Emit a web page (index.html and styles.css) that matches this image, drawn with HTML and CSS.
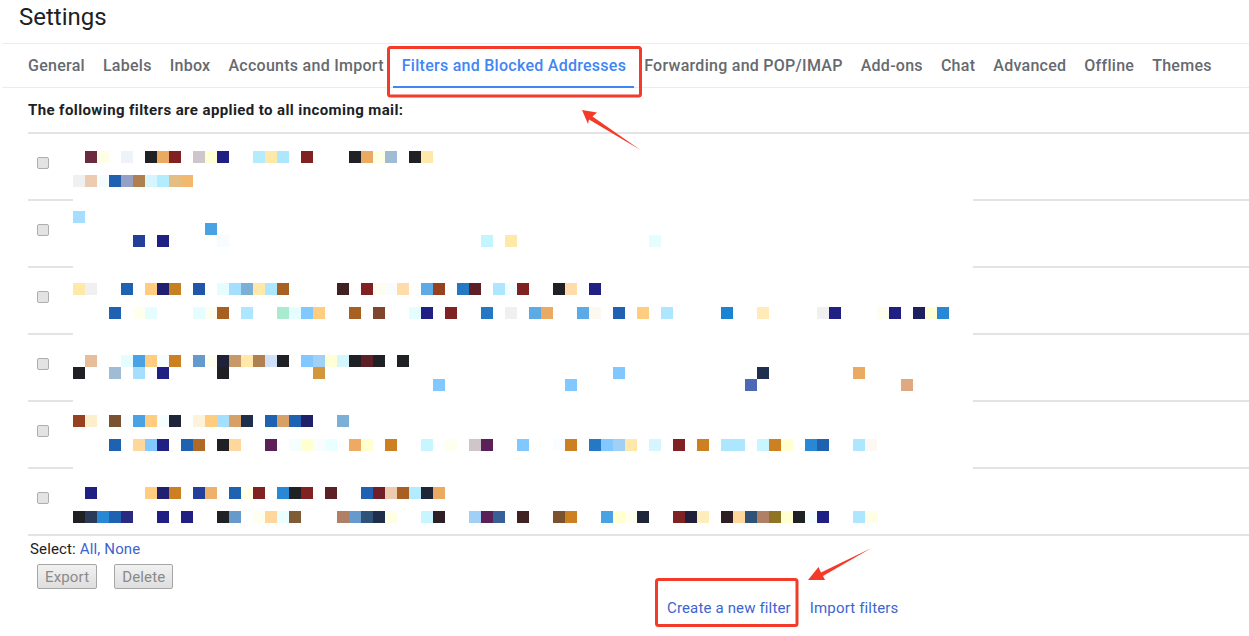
FILE: index.html
```html
<!DOCTYPE html>
<html lang="en">
<head>
<meta charset="utf-8">
<title>Settings</title>
<link rel="stylesheet" href="styles.css">
</head>
<body>
<header class="title-bar"><h1 class="title">Settings</h1></header>
<nav class="tabs">
  <a class="tab">General</a>
  <a class="tab">Labels</a>
  <a class="tab">Inbox</a>
  <a class="tab">Accounts and Import</a>
  <a class="tab active">Filters and Blocked Addresses</a>
  <a class="tab">Forwarding and POP/IMAP</a>
  <a class="tab">Add-ons</a>
  <a class="tab">Chat</a>
  <a class="tab">Advanced</a>
  <a class="tab">Offline</a>
  <a class="tab">Themes</a>
</nav>
<main class="content">
  <p class="intro">The following filters are applied to all incoming mail:</p>
  <ul class="filters">
    <li class="filter">
      <span class="check"></span>
      <svg class="mosaic" width="900" height="67" aria-hidden="true">
        <rect x="12" y="17" fill="#6b2a42"/><rect x="24" y="17" fill="#ffffe6"/><rect x="48" y="17" fill="#eef3fa"/><rect x="72" y="17" fill="#1f2124"/><rect x="84" y="17" fill="#eaaa62"/><rect x="96" y="17" fill="#802222"/><rect x="120" y="17" fill="#cec6ca"/><rect x="132" y="17" fill="#ffffd5"/><rect x="144" y="17" fill="#202084"/><rect x="180" y="17" fill="#b3ebff"/><rect x="192" y="17" fill="#ffe8aa"/><rect x="204" y="17" fill="#ade6ff"/><rect x="228" y="17" fill="#802222"/><rect x="276" y="17" fill="#1f2124"/><rect x="288" y="17" fill="#eaaa62"/><rect x="300" y="17" fill="#ffffe6"/><rect x="312" y="17" fill="#a0bcd4"/><rect x="336" y="17" fill="#1f2124"/><rect x="348" y="17" fill="#ffe8aa"/>
        <rect x="0" y="41" fill="#f0f0f0"/><rect x="12" y="41" fill="#eccbb0"/><rect x="24" y="41" fill="#f5fdff"/><rect x="36" y="41" fill="#1f62b2"/><rect x="48" y="41" fill="#96a0c4"/><rect x="60" y="41" fill="#b07f50"/><rect x="72" y="41" fill="#d5f5ff"/><rect x="84" y="41" fill="#b3ebff"/><rect x="96" y="41" fill="#e3bd82"/><rect x="108" y="41" fill="#f2b96e"/>
      </svg>
    </li>
    <li class="filter">
      <span class="check"></span>
      <svg class="mosaic" width="900" height="67" aria-hidden="true">
        <rect x="0" y="10" fill="#a5dfff"/>
        <rect x="132" y="22" fill="#48a2e4"/>
        <rect x="60" y="34" fill="#233f9a"/><rect x="84" y="34" fill="#202084"/><rect x="144" y="34" fill="#f8fcff"/><rect x="408" y="34" fill="#c3f5ff"/><rect x="432" y="34" fill="#ffe8aa"/><rect x="576" y="34" fill="#e6fdff"/>
      </svg>
    </li>
    <li class="filter">
      <span class="check"></span>
      <svg class="mosaic" width="900" height="67" aria-hidden="true">
        <rect x="0" y="15" fill="#ffe8aa"/><rect x="12" y="15" fill="#f0f0f0"/><rect x="48" y="15" fill="#1f62b2"/><rect x="72" y="15" fill="#ffcc80"/><rect x="84" y="15" fill="#201f70"/><rect x="96" y="15" fill="#c58022"/><rect x="120" y="15" fill="#2055a8"/><rect x="144" y="15" fill="#e6fdff"/><rect x="156" y="15" fill="#a5dfff"/><rect x="168" y="15" fill="#7cafd6"/><rect x="180" y="15" fill="#ffe8aa"/><rect x="192" y="15" fill="#ade6ff"/><rect x="204" y="15" fill="#a86022"/><rect x="264" y="15" fill="#402222"/><rect x="288" y="15" fill="#802222"/><rect x="300" y="15" fill="#fffdf0"/><rect x="312" y="15" fill="#fafdff"/><rect x="324" y="15" fill="#ffdcaa"/><rect x="348" y="15" fill="#5caae6"/><rect x="360" y="15" fill="#964220"/><rect x="384" y="15" fill="#2578c4"/><rect x="396" y="15" fill="#5c2026"/><rect x="420" y="15" fill="#ade6ff"/><rect x="432" y="15" fill="#f2feff"/><rect x="444" y="15" fill="#802222"/><rect x="480" y="15" fill="#1f2124"/><rect x="492" y="15" fill="#ffdcaa"/><rect x="516" y="15" fill="#202084"/>
        <rect x="36" y="39" fill="#1f62b2"/><rect x="60" y="39" fill="#ffffee"/><rect x="72" y="39" fill="#e6fdff"/><rect x="120" y="39" fill="#e6fdff"/><rect x="132" y="39" fill="#fdfdf0"/><rect x="144" y="39" fill="#a86022"/><rect x="168" y="39" fill="#ade6ff"/><rect x="204" y="39" fill="#aaeacf"/><rect x="216" y="39" fill="#e6fdff"/><rect x="228" y="39" fill="#80c8ff"/><rect x="240" y="39" fill="#ffcc80"/><rect x="276" y="39" fill="#a86022"/><rect x="300" y="39" fill="#80452c"/><rect x="336" y="39" fill="#e6fdff"/><rect x="348" y="39" fill="#202084"/><rect x="372" y="39" fill="#802222"/><rect x="408" y="39" fill="#2578c4"/><rect x="432" y="39" fill="#f0f0f0"/><rect x="456" y="39" fill="#5caae6"/><rect x="468" y="39" fill="#eaaa62"/><rect x="504" y="39" fill="#5caae6"/><rect x="516" y="39" fill="#fdf8f2"/><rect x="540" y="39" fill="#1f62b2"/><rect x="564" y="39" fill="#ffcc80"/><rect x="588" y="39" fill="#ade6ff"/><rect x="648" y="39" fill="#1c82d2"/><rect x="684" y="39" fill="#ffeab8"/><rect x="744" y="39" fill="#f0f0f0"/><rect x="756" y="39" fill="#202084"/><rect x="804" y="39" fill="#fffdf0"/><rect x="816" y="39" fill="#202084"/><rect x="840" y="39" fill="#1f2060"/><rect x="852" y="39" fill="#ffffd5"/><rect x="864" y="39" fill="#2888d6"/>
      </svg>
    </li>
    <li class="filter">
      <span class="check"></span>
      <svg class="mosaic" width="900" height="67" aria-hidden="true">
        <rect x="12" y="20" fill="#e8bd9a"/><rect x="48" y="20" fill="#e6fdff"/><rect x="60" y="20" fill="#48a2e4"/><rect x="72" y="20" fill="#ffcc80"/><rect x="84" y="20" fill="#f5fdff"/><rect x="96" y="20" fill="#cc8022"/><rect x="120" y="20" fill="#6699cc"/><rect x="132" y="20" fill="#fffdf0"/><rect x="144" y="20" fill="#20223a"/><rect x="156" y="20" fill="#c89868"/><rect x="168" y="20" fill="#ffe8aa"/><rect x="180" y="20" fill="#b08050"/><rect x="192" y="20" fill="#d0e0f8"/><rect x="204" y="20" fill="#1f2124"/><rect x="228" y="20" fill="#80c8ff"/><rect x="240" y="20" fill="#a0d0f5"/><rect x="252" y="20" fill="#ffffd5"/><rect x="264" y="20" fill="#d5f5ff"/><rect x="276" y="20" fill="#1f2124"/><rect x="288" y="20" fill="#5c2026"/><rect x="300" y="20" fill="#1f2124"/><rect x="324" y="20" fill="#1f2124"/>
        <rect x="0" y="32" fill="#1f2124"/><rect x="36" y="32" fill="#a0bcd4"/><rect x="60" y="32" fill="#a5dfff"/><rect x="84" y="32" fill="#202084"/><rect x="144" y="32" fill="#1f2124"/><rect x="240" y="32" fill="#d4963c"/><rect x="540" y="32" fill="#80c8ff"/><rect x="684" y="32" fill="#1f304e"/><rect x="780" y="32" fill="#eaaa62"/>
        <rect x="360" y="44" fill="#80c8ff"/><rect x="492" y="44" fill="#80c8ff"/><rect x="672" y="44" fill="#4d68b4"/><rect x="828" y="44" fill="#e0a880"/>
      </svg>
    </li>
    <li class="filter">
      <span class="check"></span>
      <svg class="mosaic" width="900" height="67" aria-hidden="true">
        <rect x="0" y="13" fill="#964220"/><rect x="12" y="13" fill="#fdeecc"/><rect x="36" y="13" fill="#7b5230"/><rect x="48" y="13" fill="#fafdff"/><rect x="60" y="13" fill="#48a2e4"/><rect x="72" y="13" fill="#ffcc80"/><rect x="84" y="13" fill="#f5fdff"/><rect x="96" y="13" fill="#20263a"/><rect x="120" y="13" fill="#fdf2dc"/><rect x="132" y="13" fill="#ffcc80"/><rect x="144" y="13" fill="#a5dfff"/><rect x="156" y="13" fill="#d6a066"/><rect x="168" y="13" fill="#1f2e4a"/><rect x="192" y="13" fill="#1f62b2"/><rect x="204" y="13" fill="#d6a066"/><rect x="216" y="13" fill="#1f62b2"/><rect x="228" y="13" fill="#202068"/><rect x="264" y="13" fill="#7cafd6"/>
        <rect x="36" y="37" fill="#1f62b2"/><rect x="60" y="37" fill="#ffd69c"/><rect x="72" y="37" fill="#80c8ff"/><rect x="84" y="37" fill="#202084"/><rect x="108" y="37" fill="#1f62b2"/><rect x="120" y="37" fill="#b06a28"/><rect x="144" y="37" fill="#1f2124"/><rect x="156" y="37" fill="#ffd69c"/><rect x="192" y="37" fill="#5c2058"/><rect x="216" y="37" fill="#f5fdff"/><rect x="228" y="37" fill="#ffffd0"/><rect x="240" y="37" fill="#fafdff"/><rect x="252" y="37" fill="#eaffff"/><rect x="276" y="37" fill="#eeaa62"/><rect x="288" y="37" fill="#ffffd0"/><rect x="312" y="37" fill="#cc8022"/><rect x="348" y="37" fill="#c8f6ff"/><rect x="372" y="37" fill="#fffff0"/><rect x="396" y="37" fill="#cec6ca"/><rect x="408" y="37" fill="#5c2058"/><rect x="444" y="37" fill="#80c8ff"/><rect x="480" y="37" fill="#fafdff"/><rect x="492" y="37" fill="#cc8022"/><rect x="516" y="37" fill="#2578c4"/><rect x="528" y="37" fill="#80c8ff"/><rect x="540" y="37" fill="#a0d0f5"/><rect x="552" y="37" fill="#ffe8aa"/><rect x="576" y="37" fill="#d5f5ff"/><rect x="600" y="37" fill="#802222"/><rect x="624" y="37" fill="#cc8022"/><rect x="648" y="37" fill="#ade6ff"/><rect x="660" y="37" fill="#ade6ff"/><rect x="684" y="37" fill="#c8f6ff"/><rect x="696" y="37" fill="#cc8022"/><rect x="708" y="37" fill="#ffffd0"/><rect x="732" y="37" fill="#2888d6"/><rect x="744" y="37" fill="#1f62b2"/><rect x="780" y="37" fill="#ade6ff"/><rect x="792" y="37" fill="#fdf8f2"/>
      </svg>
    </li>
    <li class="filter last">
      <span class="check"></span>
      <svg class="mosaic" width="900" height="65" aria-hidden="true">
        <rect x="12" y="18" fill="#202084"/><rect x="72" y="18" fill="#ffcc80"/><rect x="84" y="18" fill="#201f70"/><rect x="96" y="18" fill="#cc8022"/><rect x="120" y="18" fill="#233f9a"/><rect x="132" y="18" fill="#eeb06a"/><rect x="156" y="18" fill="#1f62b2"/><rect x="168" y="18" fill="#ffffe6"/><rect x="180" y="18" fill="#802222"/><rect x="204" y="18" fill="#2888d6"/><rect x="216" y="18" fill="#1f2124"/><rect x="228" y="18" fill="#802222"/><rect x="252" y="18" fill="#5c2026"/><rect x="288" y="18" fill="#1f62b2"/><rect x="300" y="18" fill="#702026"/><rect x="312" y="18" fill="#eccbb0"/><rect x="324" y="18" fill="#a86022"/><rect x="336" y="18" fill="#b3ebff"/><rect x="348" y="18" fill="#20263a"/><rect x="360" y="18" fill="#eaaa62"/>
        <rect x="0" y="42" fill="#1f2124"/><rect x="12" y="42" fill="#2a3a58"/><rect x="24" y="42" fill="#2888d6"/><rect x="36" y="42" fill="#1f62b2"/><rect x="48" y="42" fill="#2a2a80"/><rect x="84" y="42" fill="#202084"/><rect x="108" y="42" fill="#202084"/><rect x="144" y="42" fill="#1f2124"/><rect x="156" y="42" fill="#6699cc"/><rect x="180" y="42" fill="#fffff0"/><rect x="192" y="42" fill="#ffd69c"/><rect x="204" y="42" fill="#eaffff"/><rect x="216" y="42" fill="#7f5c36"/><rect x="264" y="42" fill="#b08066"/><rect x="276" y="42" fill="#6699cc"/><rect x="288" y="42" fill="#2f5278"/><rect x="300" y="42" fill="#1f2e4a"/><rect x="312" y="42" fill="#ffffe6"/><rect x="348" y="42" fill="#c8f6ff"/><rect x="360" y="42" fill="#2c2024"/><rect x="396" y="42" fill="#a0d0f5"/><rect x="408" y="42" fill="#5c2058"/><rect x="420" y="42" fill="#386098"/><rect x="444" y="42" fill="#402222"/><rect x="480" y="42" fill="#7b5230"/><rect x="492" y="42" fill="#cc8022"/><rect x="528" y="42" fill="#48a2e4"/><rect x="540" y="42" fill="#ffffd0"/><rect x="552" y="42" fill="#fffff0"/><rect x="564" y="42" fill="#20263a"/><rect x="600" y="42" fill="#802222"/><rect x="612" y="42" fill="#20203a"/><rect x="624" y="42" fill="#ffeebc"/><rect x="648" y="42" fill="#2c2024"/><rect x="660" y="42" fill="#ffd69c"/><rect x="672" y="42" fill="#2f5278"/><rect x="684" y="42" fill="#b08066"/><rect x="696" y="42" fill="#907426"/><rect x="708" y="42" fill="#ffffd0"/><rect x="720" y="42" fill="#1f2124"/><rect x="732" y="42" fill="#f5fdff"/><rect x="744" y="42" fill="#202084"/><rect x="780" y="42" fill="#ade6ff"/><rect x="792" y="42" fill="#ffffe6"/>
      </svg>
    </li>
  </ul>
  <div class="select-line">Select: <a class="link">All</a><span class="link">,</span> <a class="link">None</a></div>
  <div class="actions">
    <button class="btn" disabled>Export</button>
    <button class="btn" disabled>Delete</button>
  </div>
  <div class="filter-links">
    <a class="link">Create a new filter</a>
    <a class="link">Import filters</a>
  </div>
</main>
<svg class="annotations" width="1249" height="636" aria-hidden="true">
  <rect class="mark" x="388.500" y="47.500" width="252" height="48.500" rx="2"/>
  <rect class="mark" x="656.500" y="579.500" width="140.500" height="46" rx="2"/>
  <polygon class="arrow" points="582,110 597,112.500 592.500,116.500 640.500,150 589,119.500 588,124"/>
  <polygon class="arrow" points="808,580 818.500,567 821,572.500 871.500,548 823,576 825,580"/>
</svg>
</body>
</html>
```
FILE: styles.css
```css
* { box-sizing: border-box; }
html, body { margin: 0; padding: 0; }
body {
  position: relative;
  width: 1249px;
  height: 636px;
  overflow: hidden;
  background: #fff;
  color: #202124;
  font-family: Roboto, "Liberation Sans", sans-serif;
  font-size: 15px;
  letter-spacing: 0.15px;
}
.title-bar { height: 43px; padding: 3px 0 0 19px; }
.title {
  margin: 0;
  font-size: 24px;
  font-weight: 400;
  line-height: 28px;
  letter-spacing: 0;
  color: #202124;
}
.tabs {
  display: flex;
  gap: 18px;
  height: 45px;
  margin-left: 2px;
  padding-left: 26px;
  border-top: 1px solid #ececec;
  border-bottom: 1px solid #ececec;
  white-space: nowrap;
}
.tab {
  position: relative;
  font-size: 16px;
  font-weight: 500;
  line-height: 44px;
  letter-spacing: 0.27px;
  color: #666a6f;
}
.tab.active { color: #4285f4; }
.tab.active::after {
  content: "";
  position: absolute;
  left: -9px;
  right: -8px;
  bottom: -1px;
  height: 2px;
  background: #4285f4;
}
.content { padding-left: 28px; }
.intro {
  margin: 0;
  height: 44px;
  padding-top: 14px;
  font-size: 15px;
  font-weight: 700;
  line-height: 17px;
  letter-spacing: 0.4px;
  color: #202124;
}
.filters {
  margin: 0;
  padding: 0;
  list-style: none;
  border-top: 2px solid #e3e3e3;
}
.filter {
  display: flex;
  height: 67px;
  border-bottom: 2px solid #e3e3e3;
}
.check {
  flex: none;
  width: 12px;
  height: 12px;
  margin: 23px 24px 0 9px;
  border: 1px solid #aeaeae;
  border-radius: 2px;
  background: #e3e3e3;
}
.mosaic { display: block; flex: none; background: #fff; }
.mosaic rect { width: 12px; height: 12px; }
.select-line {
  padding: 5px 0 0 2px;
  height: 28px;
  line-height: 17px;
  color: #202124;
}
.link { color: #3c64d0; }
.actions {
  display: flex;
  gap: 17px;
  padding-left: 9px;
}
.btn {
  height: 25px;
  padding: 0 7px;
  border: 1px solid #a6a6a6;
  border-radius: 2px;
  background: linear-gradient(#f1f1f1, #dedede);
  font-family: inherit;
  font-size: 15px;
  letter-spacing: 0.15px;
  color: #8a8a8a;
}
.filter-links {
  display: flex;
  gap: 19px;
  padding: 9px 0 0 639px;
  line-height: 20px;
}
.annotations { position: absolute; left: 0; top: 0; pointer-events: none; }
.mark { fill: none; stroke: #f43b2a; stroke-width: 3; }
.arrow { fill: #f43b2a; }
```
